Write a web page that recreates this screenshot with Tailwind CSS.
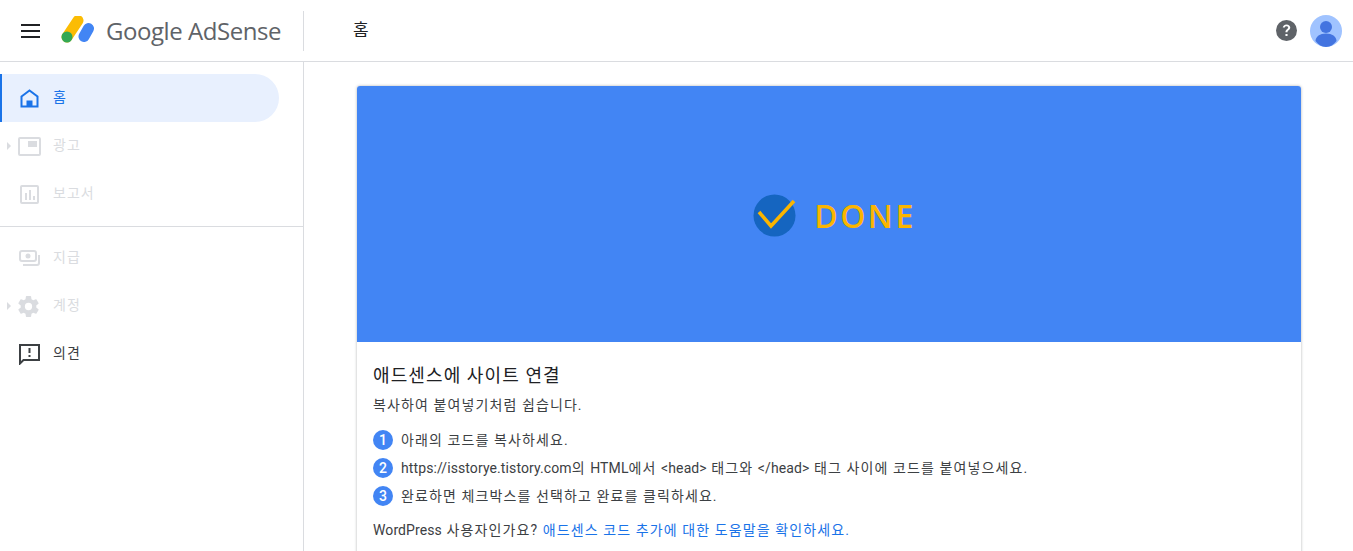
<!DOCTYPE html>
<html lang="ko">
  <head>
    <meta charset="UTF-8" />
    <script src="https://cdn.jsdelivr.net/npm/@tailwindcss/browser@4"></script>
    <title>Google AdSense</title>
  </head>
  <body class="h-[551px] overflow-hidden bg-white font-['Roboto','Noto_Sans_CJK_KR',sans-serif] text-[#3c4043]">
    <!-- top bar -->
    <header class="flex h-[62px] items-center border-b border-[#dadce0]">
      <button class="ml-[21px] flex w-[19px] flex-col gap-[4px]">
        <span class="h-[2px] bg-[#202124]"></span>
        <span class="h-[2px] bg-[#202124]"></span>
        <span class="h-[2px] bg-[#202124]"></span>
      </button>
      <svg class="ml-[21px] h-[30px] w-[34px]" viewBox="0 0 34 30">
        <line x1="17" y1="4.500" x2="6" y2="21" stroke="#fbbc04" stroke-width="11" stroke-linecap="round" />
        <line x1="27.500" y1="12.500" x2="23" y2="20.500" stroke="#4285f4" stroke-width="11" stroke-linecap="round" />
        <circle cx="6" cy="21" r="5.500" fill="#34a853" />
      </svg>
      <span class="ml-[11px] w-[175px] whitespace-nowrap font-['Open_Sans'] text-[24px] tracking-[-0.45px] text-[#5f6368]">Google AdSense</span>
      <span class="ml-[22px] h-[40px] w-px bg-[#dadce0]"></span>
      <h1 class="ml-[49px] text-[17px] leading-none text-[#202124]">홈</h1>
      <div class="ml-auto mr-[11px] flex items-center gap-[13px]">
        <svg class="h-[21px] w-[21px]" viewBox="0 0 24 24">
          <circle cx="12" cy="12" r="12" fill="#5f6368" />
          <path d="M12 5c-2.400 0-4.100 1.500-4.300 3.700h2.300c.2-1 1-1.600 2-1.600 1.100 0 1.900.7 1.900 1.600 0 .8-.4 1.200-1.300 1.900-1.200.9-1.800 1.700-1.800 3.400h2.300c0-1.100.3-1.500 1.300-2.300 1.100-.8 1.900-1.700 1.900-3.100C16.300 6.500 14.500 5 12 5zM10.800 16h2.400v2.400h-2.400z" fill="#fff" />
        </svg>
        <svg class="h-[32px] w-[32px]" viewBox="0 0 32 32">
          <circle cx="16" cy="16" r="16" fill="#a0c3ff" />
          <circle cx="16" cy="12" r="6" fill="#4374e0" />
          <path d="M5.500 26c0-4.500 4.500-7.500 10.500-7.500s10.500 3 10.500 7.500c-2.800 3.700-6.400 6-10.500 6s-7.700-2.300-10.500-6z" fill="#4374e0" />
        </svg>
      </div>
    </header>

    <div class="flex h-[489px]">
      <!-- side nav -->
      <nav class="w-[304px] shrink-0 border-r border-[#dadce0] pt-3 text-[14px] leading-none tracking-[1px]">
        <div class="flex h-[48px] w-[279px] items-center rounded-r-[24px] border-l-2 border-[#1a73e8] bg-[#e8f0fe] text-[#1a73e8]">
          <svg class="ml-[18px] h-[19px] w-[19px]" viewBox="0 0 19 19" fill="none">
            <path d="M1.500 7.500 9.500 1.500l8 6v10h-16z" stroke="currentColor" stroke-width="2" />
            <path d="M6.500 11.500h6v6h-6z" fill="currentColor" />
          </svg>
          <span class="ml-[14px] -translate-y-px">홈</span>
        </div>
        <div class="flex h-[48px] items-center text-[#dadce0]">
          <span class="ml-[7px] h-0 w-0 border-y-[4px] border-l-[4px] border-y-transparent border-l-[#dadce0]"></span>
          <svg class="ml-[7px] h-[19px] w-[23px]" viewBox="0 0 23 19" fill="none">
            <rect x="1" y="1" width="21" height="17" rx="1" stroke="currentColor" stroke-width="2" />
            <rect x="10" y="4" width="9" height="6" fill="currentColor" />
          </svg>
          <span class="ml-[12px] -translate-y-px">광고</span>
        </div>
        <div class="flex h-[48px] items-center text-[#dadce0]">
          <svg class="ml-[20px] h-[19px] w-[19px]" viewBox="0 0 19 19" fill="none">
            <rect x="1" y="1" width="17" height="17" rx="1" stroke="currentColor" stroke-width="2" />
            <path d="M5 8h2v7H5zM9 5h2v10H9zM13 11h2v4h-2z" fill="currentColor" />
          </svg>
          <span class="ml-[14px] -translate-y-px">보고서</span>
        </div>
        <div class="mt-2 mb-[7px] h-px bg-[#dadce0]"></div>
        <div class="flex h-[48px] items-center text-[#dadce0]">
          <svg class="ml-[19px] h-[19px] w-[21px]" viewBox="0 0 21 19" fill="none">
            <rect x="1" y="2" width="16" height="10" rx="2" stroke="currentColor" stroke-width="2" />
            <circle cx="9" cy="7" r="2.500" fill="currentColor" />
            <path d="M20 6v8a2 2 0 0 1-2 2H4" stroke="currentColor" stroke-width="2" />
          </svg>
          <span class="ml-[13px] -translate-y-px">지급</span>
        </div>
        <div class="flex h-[48px] items-center text-[#dadce0]">
          <span class="ml-[7px] h-0 w-0 border-y-[4px] border-l-[4px] border-y-transparent border-l-[#dadce0]"></span>
          <svg class="ml-[5px] h-[25px] w-[25px]" viewBox="0 0 24 24" fill="none">
            <path fill="currentColor" fill-rule="evenodd" d="M19.430 12.980c.04-.32.07-.64.07-.98s-.03-.66-.07-.98l2.110-1.650c.19-.15.24-.42.12-.64l-2-3.460c-.12-.22-.39-.3-.61-.22l-2.490 1c-.52-.4-1.080-.73-1.690-.98l-.38-2.650A.49.49 0 0 0 14 2h-4c-.25 0-.46.18-.49.42l-.38 2.650c-.61.25-1.170.59-1.690.98l-2.490-1c-.23-.09-.49 0-.61.22l-2 3.460c-.13.22-.07.49.12.64l2.110 1.650c-.04.32-.07.65-.07.98s.03.66.07.98l-2.110 1.650c-.19.15-.24.42-.12.64l2 3.460c.12.22.39.3.61.22l2.490-1c.52.4 1.080.73 1.690.98l.38 2.650c.03.24.24.42.49.42h4c.25 0 .46-.18.49-.42l.38-2.650c.61-.25 1.170-.59 1.690-.98l2.490 1c.23.09.49 0 .61-.22l2-3.460c.12-.22.07-.49-.12-.64l-2.110-1.650zM12 15.500a3.500 3.500 0 1 1 0-7 3.500 3.500 0 0 1 0 7z" />
          </svg>
          <span class="ml-[12px] -translate-y-px">계정</span>
        </div>
        <div class="flex h-[48px] items-center text-[#3c4043]">
          <svg class="ml-[19px] h-[21px] w-[21px]" viewBox="0 0 21 21" fill="none">
            <path d="M1 1h19v15H4.500L1 19.500z" stroke="#3c4043" stroke-width="2" />
            <path d="M9.500 4h2v5h-2zM9.500 11h2v2h-2z" fill="#3c4043" />
          </svg>
          <span class="ml-[13px] -translate-y-px">의견</span>
        </div>
      </nav>

      <!-- main card -->
      <main class="flex-1 pt-6 pl-[53px] pr-[52px]">
        <section class="h-[600px] rounded-[3px] bg-white shadow-[0_0_3px_rgba(60,64,67,0.4)]">
          <div class="flex h-[256px] items-center justify-center gap-[18px] rounded-t-[3px] bg-[#4285f4] pt-[3px] pl-[11px]">
            <svg class="h-[43px] w-[43px] overflow-visible" viewBox="0 0 43 43" fill="none">
              <circle cx="21.500" cy="21.500" r="21" fill="#1565c0" />
              <path d="M6 18l12 14L41 7" stroke="#fbb500" stroke-width="3.500" />
            </svg>
            <span class="font-['Open_Sans'] text-[32px] font-semibold leading-none tracking-[2.500px] text-[#fbb500]">DONE</span>
          </div>
          <div class="px-4 pt-[22px] text-[14px] tracking-[1.1px]">
            <h2 class="text-[18px] leading-[24px] text-[#202124]">애드센스에 사이트 연결</h2>
            <p class="mt-[7px] leading-[20px]">복사하여 붙여넣기처럼 쉽습니다.</p>
            <ol class="mt-[15px] flex flex-col gap-2">
              <li class="flex h-[20px] items-center gap-2">
                <span class="flex h-[20px] w-[20px] items-center justify-center rounded-full bg-[#4285f4] text-[14px] font-medium tracking-normal text-white">1</span>
                <span>아래의 코드를 복사하세요.</span>
              </li>
              <li class="flex h-[20px] items-center gap-2">
                <span class="flex h-[20px] w-[20px] items-center justify-center rounded-full bg-[#4285f4] text-[14px] font-medium tracking-normal text-white">2</span>
                <span><span class="tracking-[0.1px]">https://isstorye.tistory.com</span>의 <span class="tracking-[0.1px]">HTML</span>에서 <span class="tracking-[0.1px]">&lt;head&gt;</span> 태그와 <span class="tracking-[0.1px]">&lt;/head&gt;</span> 태그 사이에 코드를 붙여넣으세요.</span>
              </li>
              <li class="flex h-[20px] items-center gap-2">
                <span class="flex h-[20px] w-[20px] items-center justify-center rounded-full bg-[#4285f4] text-[14px] font-medium tracking-normal text-white">3</span>
                <span>완료하면 체크박스를 선택하고 완료를 클릭하세요.</span>
              </li>
            </ol>
            <p class="mt-[14px] leading-[20px]"><span class="tracking-[0.1px]">WordPress</span> 사용자인가요? <a class="text-[#1a73e8]" href="#">애드센스 코드 추가에 대한 도움말을 확인하세요.</a></p>
          </div>
        </section>
      </main>
    </div>
  </body>
</html>
